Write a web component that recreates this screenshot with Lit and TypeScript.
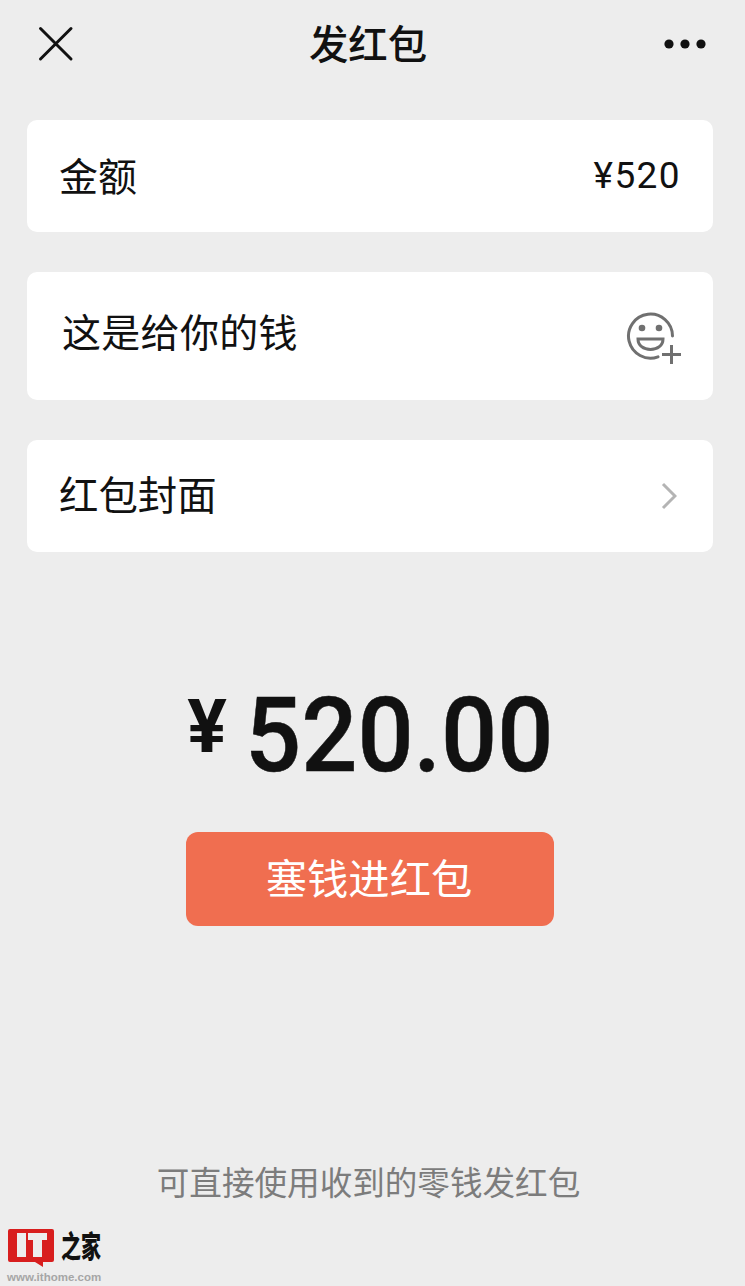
import { LitElement, html, css } from "lit";
import { customElement } from "lit/decorators.js";

@customElement("app-root")
export class AppRoot extends LitElement {
  static styles = css`
    :host { display: block; width: 745px; height: 1286px; background: #ededed; font-family: "Noto Sans CJK SC", "Noto Sans", sans-serif; color: #111; position: relative; overflow: hidden; }
    .page { display: flex; flex-direction: column; height: 1286px; }
    .nav { height: 120px; flex: none; display: grid; grid-template-columns: 1fr auto 1fr; padding: 0 39px 0 38px; box-sizing: border-box; }
    .nav svg { display: block; margin-top: 26px; }
    .nav .more { justify-self: end; margin-top: 38px; }
    .title { font-size: 39.4px; line-height: 50px; margin-top: 17px; font-weight: 500; transform: translateX(-4px); }
    .cards { display: flex; flex-direction: column; gap: 40px; padding: 0 32px 0 27px; }
    .card { background: #fff; border-radius: 10px; height: 112px; display: flex; align-items: center; justify-content: space-between; padding: 0 36px 0 32px; box-sizing: border-box; font-size: 39px; }
    .card .lbl { line-height: 58px; margin-top: -5px; }
    .card .lbl.wide { font-size: 39.4px; margin-top: -6px; }
    .card.amt { padding-right: 32px; }
    .card.msg { height: 128px; padding-left: 35px; padding-right: 31px; align-items: flex-start; }
    .msg .t { margin-top: 29px; line-height: 58px; font-size: 39px; letter-spacing: 0.3px; }
    .msg svg { margin-top: 39px; }
    .val { font-family: Roboto, sans-serif; font-size: 37px; letter-spacing: 1.4px; line-height: 44px; }
    .total { display: flex; justify-content: center; align-items: flex-start; margin-top: 129px; height: 111px; font-family: Roboto, sans-serif; font-weight: 500; color: #111; padding-right: 7px; }
    .yen { font-size: 74px; line-height: 74px; margin: 9px 18px 0 0; font-weight: 700; }
    .num { font-size: 103px; line-height: 110px; display: block; width: 306px; white-space: nowrap; transform: scaleX(0.96); transform-origin: left top; -webkit-text-stroke: 0.5px #111; }
    .btn { align-self: center; width: 368px; height: 94px; margin: 40px 0 0 -5px; border-radius: 12px; background: #f06e50; color: #fff; font-size: 41.3px; display: flex; align-items: center; justify-content: center; }
    .btn span { margin-top: -6px; margin-left: -2px; }
    .foot { margin-top: auto; text-align: center; font-size: 32.6px; color: #7c7c7c; line-height: 44px; padding-bottom: 83px; transform: translateX(-4px); }
    .logo { position: absolute; left: 8px; top: 1229px; width: 100px; height: 56px; }
    .logo .zj { position: absolute; left: 53px; top: 6px; font-size: 20px; line-height: 20px; font-weight: 900; color: #111; letter-spacing: 0; white-space: nowrap; transform: scaleY(1.5); }
    .logo .url { position: absolute; left: -1px; top: 41px; font-family: "Liberation Sans", sans-serif; font-size: 11.5px; line-height: 14px; font-weight: 700; color: #a6a6a6; white-space: nowrap; }
    .bubble { display: block; }
  `;

  render() {
    return html`
      <div class="page">
        <div class="nav">
          <svg width="36" height="36" viewBox="0 0 36 36"><path d="M2.5 2.5 L33 33 M33 2.5 L2.5 33" stroke="#111" stroke-width="3" stroke-linecap="round" fill="none"/></svg>
          <div class="title">发红包</div>
          <svg class="more" width="42" height="12" viewBox="0 0 42 12"><circle cx="5" cy="6" r="4.6" fill="#111"/><circle cx="21" cy="6" r="4.6" fill="#111"/><circle cx="37" cy="6" r="4.6" fill="#111"/></svg>
        </div>
        <div class="cards">
          <div class="card amt"><span class="lbl">金额</span><span class="val">¥520</span></div>
          <div class="card msg">
            <span class="t">这是给你的钱</span>
            <svg width="56" height="54" viewBox="0 0 56 54" fill="none" stroke="#707070" stroke-width="3">
              <path d="M32 45.8 A22 22 0 1 1 46.5 25" stroke-linecap="round"/>
              <circle cx="16" cy="17" r="3.3" fill="#707070" stroke="none"/>
              <circle cx="33" cy="17" r="3.3" fill="#707070" stroke="none"/>
              <path d="M12 28 H37 C37 34.5 31.5 38.5 24.5 38.5 C17.5 38.5 12 34.5 12 28 Z"/>
              <path d="M45.5 34 V53 M36 43.5 H55"/>
            </svg>
          </div>
          <div class="card"><span class="lbl wide">红包封面</span>
            <svg width="16" height="28" viewBox="0 0 16 28" fill="none"><path d="M2 2 L14 14 L2 26" stroke="#b4b4b4" stroke-width="3"/></svg>
          </div>
        </div>
        <div class="total"><span class="yen">¥</span><span class="num">520.00</span></div>
        <div class="btn"><span>塞钱进红包</span></div>
        <div class="foot">可直接使用收到的零钱发红包</div>
      </div>
      <div class="logo">
        <svg class="bubble" width="48" height="40" viewBox="0 0 48 40">
          <path d="M2 0 H44 Q46 0 46 2 V31 Q46 33 44 33 H35 V38 L27 33 H2 Q0 33 0 31 V2 Q0 0 2 0 Z" fill="#d81e1e"/>
          <path d="M9 4 H18 V28 H9 Z M20 4 H39 V11 H34 V28 H25 V11 H20 Z" fill="#ededed"/>
        </svg>
        <span class="zj">之家</span>
        <span class="url">www.ithome.com</span>
      </div>
    `;
  }
}
